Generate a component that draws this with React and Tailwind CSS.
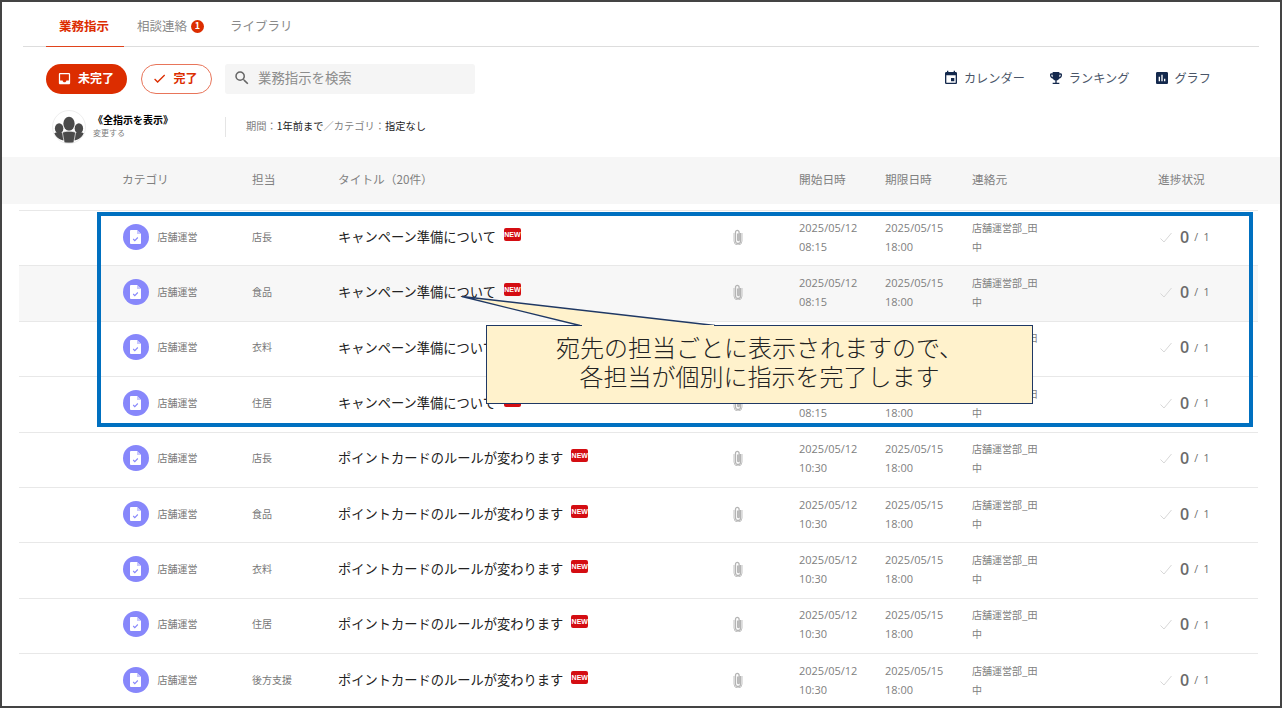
import React from 'react';
import { MdInbox, MdCheck, MdSearch, MdEvent, MdEmojiEvents, MdAssessment } from 'react-icons/md';

const font = { fontFamily: '"Noto Sans CJK JP", sans-serif' };

const rows = [
  { who: '店長', title: 'キャンペーン準備について', time: '08:15' },
  { who: '食品', title: 'キャンペーン準備について', time: '08:15', on: true },
  { who: '衣料', title: 'キャンペーン準備について', time: '08:15' },
  { who: '住居', title: 'キャンペーン準備について', time: '08:15' },
  { who: '店長', title: 'ポイントカードのルールが変わります', time: '10:30' },
  { who: '食品', title: 'ポイントカードのルールが変わります', time: '10:30' },
  { who: '衣料', title: 'ポイントカードのルールが変わります', time: '10:30' },
  { who: '住居', title: 'ポイントカードのルールが変わります', time: '10:30' },
  { who: '後方支援', title: 'ポイントカードのルールが変わります', time: '10:30' },
];

const DocIcon = () => (
  <div className="w-[26px] h-[26px] rounded-full bg-[#8787fb] flex items-center justify-center shrink-0">
    <svg width="11" height="14" viewBox="0 0 11 14">
      <path d="M1 0h6l4 4v9a1 1 0 0 1-1 1H1a1 1 0 0 1-1-1V1a1 1 0 0 1 1-1z" fill="#fff" />
      <path d="M7 0v4h4z" fill="#c9c9fb" />
      <path d="M3.2 9l1.6 1.7 3-3.2" fill="none" stroke="#8787fb" strokeWidth="1.1" />
    </svg>
  </div>
);

const Clip = () => (
  <svg width="10" height="16" viewBox="0 0 10 16" fill="none" stroke="#b4b4b4" strokeWidth="1.3">
    <path d="M7.5 4v8a2.5 2.5 0 0 1-5 0V3.2a1.8 1.8 0 0 1 3.6 0V11a.7.7 0 0 1-1.4 0V4.5" />
    <path d="M9 4v8a4 4 0 0 1-8 0V4" strokeWidth="0.8" />
  </svg>
);

const Avatar = () => (
  <div className="w-[34px] h-[34px] rounded-full border border-[#eeeeee] overflow-hidden flex items-center justify-center shrink-0">
    <svg width="34" height="34" viewBox="0 0 34 34" fill="#4a4a4a">
      <ellipse cx="6.5" cy="18.5" rx="4.5" ry="5.5" />
      <ellipse cx="27.5" cy="18.5" rx="4.5" ry="5.5" />
      <path d="M1 24c2-2 8-2 10 0l3 7-4 0C6 30 3 28 1 24z" />
      <path d="M33 24c-2-2-8-2-10 0l-3 7 4 0c4-1 7-3 9-7z" />
      <ellipse cx="17" cy="13.5" rx="6" ry="7.5" />
      <path d="M10 23c2-2 12-2 14 0l-2 11H12z" stroke="#fff" strokeWidth="0.7" />
    </svg>
  </div>
);

const Row = ({ row }) => (
  <div className={`flex items-center h-[55.4px] border-b border-[#e8e8e8] pl-[103.5px] pb-[3px] ${row.on ? 'bg-[#f7f7f7]' : 'bg-white'}`}>
    <div className="w-[129.5px] flex items-center gap-[9px] text-[10px] text-[#777777]">
      <DocIcon />
      <span className="pb-[1px]">店舗運営</span>
    </div>
    <div className="w-[86px] text-[10px] text-[#777777] pb-[1px]">{row.who}</div>
    <div className="w-[461px] flex items-center relative">
      <span className="text-[13.25px] text-[#222222] whitespace-nowrap">{row.title}</span>
      <span className="ml-[8px] -mt-[5px] w-[17px] h-[13px] rounded-[2px] bg-[#d40d12] text-white text-[7px] font-bold leading-[13px] text-center" style={{ fontFamily: '"Liberation Sans", sans-serif' }}>NEW</span>
      <span className="absolute left-[395px] top-1/2 -translate-y-1/2 flex"><Clip /></span>
    </div>
    <div className="w-[86px] text-[11px] leading-[19px] text-[#808080]" style={{ fontFamily: '"Open Sans", sans-serif' }}>2025/05/12<br />{row.time}</div>
    <div className="w-[87px] text-[11px] leading-[19px] text-[#808080]" style={{ fontFamily: '"Open Sans", sans-serif' }}>2025/05/15<br />18:00</div>
    <div className="w-[187px] text-[10px] leading-[19px] text-[#808080]"><div className="w-[70px] break-all">店舗運営部_田中</div></div>
    <div className="flex items-center text-[#6b6b6b]">
      <svg width="14" height="12" viewBox="0 0 14 12" fill="none" stroke="#d8d8d8" strokeWidth="1"><path d="M1.5 7.5l3.5 3.5L12.5 2" /></svg>
      <span className="ml-[7px] text-[16px] font-semibold leading-none" style={{ fontFamily: '"Open Sans", sans-serif' }}>0</span>
      <span className="ml-[5px] mt-[2px] text-[10.5px] whitespace-pre" style={{ fontFamily: '"Open Sans", sans-serif' }}>/  1</span>
    </div>
  </div>
);

const App = () => {
  return (
    <div className="relative w-[1282px] h-[708px] border-2 border-[#444444] overflow-hidden bg-white" style={font}>
      <div className="mx-[21px] mt-[1px] h-[44px] border-b border-[#dddddd] flex pl-[23px]">
        <div className="w-[78px] h-[44px] pt-[3px] pr-[2px] border-b border-[#e0431c] text-[12.5px] font-bold text-[#dc2d00] flex items-center justify-center">業務指示</div>
        <div className="ml-[13px] h-[43px] pt-[3px] flex items-center text-[12.5px] text-[#8a8a8a]">
          相談連絡
          <span className="ml-[4px] w-[13px] h-[13px] rounded-full bg-[#dc2d00] text-white text-[9px] font-bold flex items-center justify-center">1</span>
        </div>
        <div className="ml-[26px] h-[43px] pt-[3px] flex items-center text-[12.5px] text-[#8a8a8a]">ライブラリ</div>
      </div>

      <div className="flex items-center mt-[17px] pl-[44px] h-[30px]">
        <button className="w-[81px] h-[30px] pb-[2px] pr-[2px] rounded-full bg-[#dc2d00] text-white text-[12px] font-bold flex items-center justify-center gap-[6px]">
          <MdInbox className="text-[15px]" />未完了
        </button>
        <button className="ml-[14px] w-[71px] h-[30px] pb-[2px] pr-[3px] rounded-full border border-[#e8755a] text-[#dc2d00] text-[12px] font-bold flex items-center justify-center gap-[6px]">
          <MdCheck className="text-[15px]" />完了
        </button>
        <div className="ml-[13px] w-[250px] h-[30px] pb-[3px] rounded-[3px] bg-[#f5f5f5] flex items-center pl-[8px] gap-[7px] text-[13.4px] text-[#8c8c8c]">
          <MdSearch className="text-[18px] text-[#666666]" />業務指示を検索
        </div>
        <div className="ml-auto mr-[69px] pb-[2px] flex items-center text-[12.2px] text-[#4a5568]">
          <MdEvent className="text-[16px] text-[#14294d]" /><span className="ml-[5px]">カレンダー</span>
          <MdEmojiEvents className="ml-[23px] text-[16px] text-[#14294d]" /><span className="ml-[5px]">ランキング</span>
          <MdAssessment className="ml-[25px] text-[16px] text-[#14294d]" /><span className="ml-[4px]">グラフ</span>
        </div>
      </div>

      <div className="flex items-center mt-[16px] pl-[50px] h-[34px]">
        <Avatar />
        <div className="ml-[7px] w-[132px] pb-[3px]">
          <div className="text-[10px] font-bold leading-[14px] text-black">《全指示を表示》</div>
          <div className="text-[8px] leading-[12px] text-[#808080]">変更する</div>
        </div>
        <div className="w-px h-[20px] bg-[#e5e5e5]" />
        <div className="ml-[20px] pb-[2px] text-[10.25px] text-[#808080]">
          期間：<span className="text-[#222222]">1年前まで</span>／カテゴリ：<span className="text-[#222222]">指定なし</span>
        </div>
      </div>

      <div className="mt-[13px] h-[47px] pb-[4px] bg-[#f6f6f6] flex items-center pl-[120px] text-[11.7px] text-[#808080]">
        <div className="w-[130px]">カテゴリ</div>
        <div className="w-[86px]">担当</div>
        <div className="w-[461px]">タイトル（20件）</div>
        <div className="w-[86px]">開始日時</div>
        <div className="w-[87px]">期限日時</div>
        <div className="w-[186px]">連絡元</div>
        <div>進捗状況</div>
      </div>

      <div className="mt-[6px] ml-[17px] w-[1239px] border-t border-[#e8e8e8]">
        {rows.map((row, i) => <Row key={i} row={row} />)}
      </div>

      <div className="absolute left-[95px] top-[210px] w-[1156px] h-[215px] border-4 border-[#0070c0]" />

      <svg className="absolute left-[450px] top-[285px]" width="280" height="45" viewBox="0 0 280 45">
        <path d="M128 38.5L10 9.5L263 38.5" fill="#fff2cc" stroke="#1f3864" strokeWidth="1.3" />
      </svg>
      <div className="absolute left-[484px] top-[323px] w-[547px] h-[79px] pb-[7px] bg-[#fff2cc] border border-[#1f3864] border-t-0 flex flex-col items-center justify-center text-[24px] leading-[29px] font-light text-[#222222]">
        <div className="absolute left-0 top-0 h-px w-[95px] bg-[#1f3864]" />
        <div className="absolute right-0 top-0 h-px w-[318px] bg-[#1f3864]" />
        <div>宛先の担当ごとに表示されますので、</div>
        <div>各担当が個別に指示を完了します</div>
      </div>
    </div>
  );
};

export default App;
